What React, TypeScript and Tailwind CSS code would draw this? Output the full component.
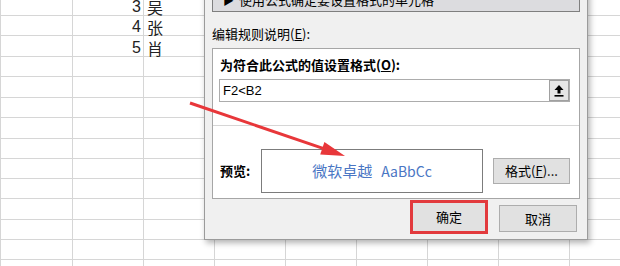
const rowHeights = [16, 20, 21, 20, 21, 20, 21, 20, 20, 20, 21, 20, 20, 20];
const cells: Record<number, [string, string]> = { 0: ["3", "吴"], 1: ["4", "张"], 2: ["5", "肖"] };

function Sheet() {
  return (
    <div className="flex flex-col">
      {rowHeights.map((h, r) => (
        <div
          key={r}
          className={`flex shrink-0 border-b border-[#d6d6d6] ${h === 16 ? "h-[16px]" : h === 20 ? "h-[20px]" : "h-[21px]"}`}
        >
          <div className="w-[73px] shrink-0 border-x border-[#d6d6d6]" />
          <div className="w-[71px] shrink-0 border-r border-[#d6d6d6] flex items-end justify-end pr-[2px] text-[16px] leading-[16px] text-[#222] font-['Liberation_Sans',sans-serif]">
            {cells[r]?.[0]}
          </div>
          <div className="w-[71px] shrink-0 border-r border-[#d6d6d6] flex items-end pl-[3px] text-[16px] leading-[16px] text-[#222] font-['Noto_Sans_CJK_SC',sans-serif]">
            {cells[r]?.[1]}
          </div>
          {[0, 1, 2, 3, 4, 5].map((c) => (
            <div key={c} className="w-[71px] shrink-0 border-r border-[#d6d6d6]" />
          ))}
        </div>
      ))}
    </div>
  );
}

function UploadIcon() {
  return (
    <svg width="10" height="13" viewBox="0 0 10 13">
      <polygon points="5,1 9.5,6 0.5,6" fill="#000" />
      <rect x="3.5" y="5.5" width="3" height="4" fill="#000" />
      <rect x="0.5" y="11" width="9" height="1.6" fill="#000" />
    </svg>
  );
}

function Dialog() {
  return (
    <div className="absolute left-[204px] top-[-20px] w-[384px] h-[260px] bg-[#f0f0f0] border border-[#9b9b9b] shadow-[2px_3px_6px_rgba(0,0,0,0.3)] px-[7px] flex flex-col text-[13px] leading-[18px] text-black font-['Noto_Sans_CJK_SC',sans-serif]">
      <div className="h-[31px] shrink-0 bg-[#dcdcdf] border border-[#7f7f7f] pl-[10px] pt-[10px] flex gap-[5px] leading-[16px]">
        <span className="text-[11px]">▶</span>
        <span>使用公式确定要设置格式的单元格</span>
      </div>

      <div className="mt-[13px]">
        编辑规则说明(<span className="underline">E</span>):
      </div>

      <div className="mt-[5px] h-[151px] shrink-0 bg-white border border-[#a6a6a6] flex flex-col">
        <div className="pl-[7px] pt-[7px] font-bold">
          为符合此公式的值设置格式(<span className="underline">O</span>):
        </div>
        <div className="mt-[5px] ml-[6px] w-[351px] h-[23px] border border-[#acacac] flex items-start justify-between">
          <span className="pl-[3px] leading-[21px] font-['Liberation_Sans',sans-serif]">F2&lt;B2</span>
          <div className="w-[20px] h-[21px] bg-[#e6e6e6] border border-[#a0a0a0] flex items-center justify-center">
            <UploadIcon />
          </div>
        </div>
        <div className="mt-[23px] border-t border-[#d6d6d6]" />
        <div className="mt-[23px] flex items-center">
          <div className="w-[48px] pl-[7px] font-bold">预览:</div>
          <div className="w-[222px] h-[44px] border border-[#7c7c7c] flex items-center justify-center gap-[9px] text-[15px] text-[#4a76c4]">
            <span>微软卓越</span>
            <span className="text-[14px]">AaBbCc</span>
          </div>
          <div className="ml-[10px] w-[77px] h-[26px] bg-[#e1e1e1] border border-[#adadad] flex items-center justify-center">
            格式(<span className="underline">F</span>)...
          </div>
        </div>
      </div>

      <div className="flex justify-end items-start mr-[3px]">
        <div className="mt-[1px] w-[78px] h-[34px] border-[3px] border-[#e23a3d] flex">
          <div className="flex-1 bg-[#e1e1e1] flex items-center justify-center">确定</div>
        </div>
        <div className="ml-[11px] mt-[6px] w-[78px] h-[27px] bg-[#e1e1e1] border border-[#adadad] flex items-center justify-center">
          取消
        </div>
      </div>
    </div>
  );
}

function Arrow() {
  return (
    <svg className="absolute left-0 top-0 pointer-events-none" width="620" height="266" viewBox="0 0 620 266">
      <line x1="190" y1="103" x2="323" y2="148.4" stroke="#e8373a" strokeWidth="3" />
      <polygon points="345,156 320.2,154.4 324.4,142" fill="#e8373a" />
    </svg>
  );
}

export default function App() {
  return (
    <div className="relative w-[620px] h-[266px] overflow-hidden bg-white">
      <Sheet />
      <Dialog />
      <Arrow />
    </div>
  );
}
